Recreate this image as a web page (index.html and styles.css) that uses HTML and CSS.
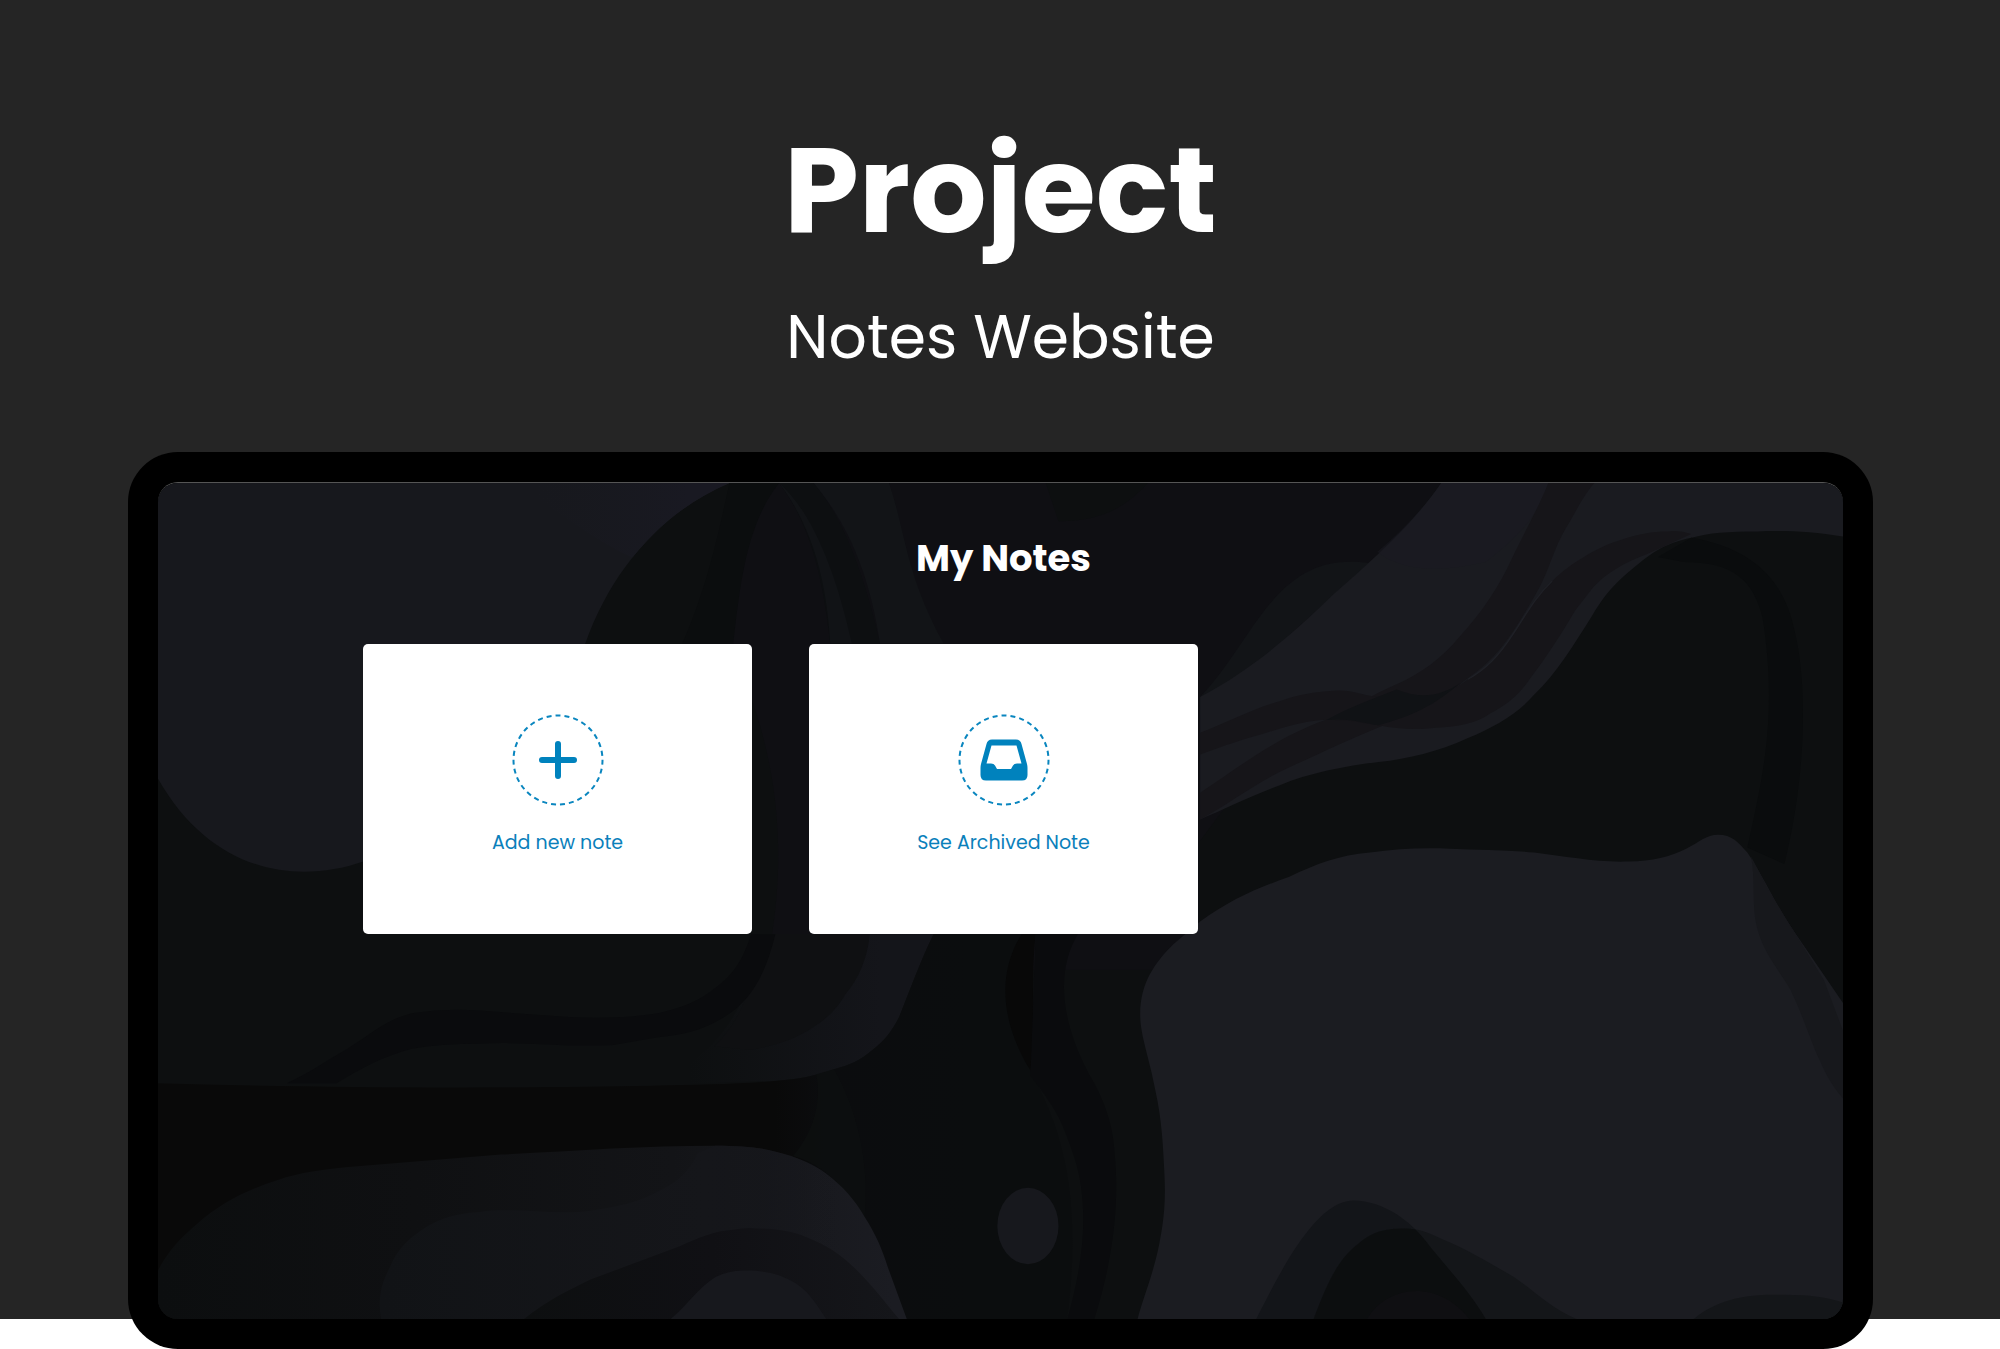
FILE: index.html
```html
<!DOCTYPE html>
<html lang="en">
<head>
<meta charset="utf-8">
<meta name="viewport" content="width=device-width, initial-scale=1">
<title>Project – Notes Website</title>
<link rel="stylesheet" href="styles.css">
</head>
<body>
<section class="showcase">
  <header class="intro">
    <h1 class="intro-title">Project</h1>
    <p class="intro-subtitle">Notes Website</p>
  </header>
  <div class="device">
    <main class="screen">
      <svg class="backdrop" viewBox="124 378 1321 656" preserveAspectRatio="none" aria-hidden="true">
        <defs>
          <linearGradient id="dune" x1="124" x2="700" y1="0" y2="0" gradientUnits="userSpaceOnUse">
            <stop offset="0" stop-color="#0c0e0f"/><stop offset=".35" stop-color="#0f1012"/><stop offset=".7" stop-color="#131417"/><stop offset="1" stop-color="#1b1c22"/>
          </linearGradient>
          <linearGradient id="hollow" x1="300" x2="660" y1="0" y2="0" gradientUnits="userSpaceOnUse">
            <stop offset="0" stop-color="#111316"/><stop offset=".7" stop-color="#15161a"/><stop offset="1" stop-color="#15161b" stop-opacity="0"/>
          </linearGradient>
          <linearGradient id="night" x1="124" x2="760" y1="0" y2="0" gradientUnits="userSpaceOnUse">
            <stop offset="0" stop-color="#090909"/><stop offset=".76" stop-color="#090909"/><stop offset=".82" stop-color="#0b0c0e"/><stop offset="1" stop-color="#0b0d0e"/>
          </linearGradient>
          <linearGradient id="lens" x1="411" x2="705" y1="0" y2="0" gradientUnits="userSpaceOnUse">
            <stop offset="0" stop-color="#0d0f10"/><stop offset=".5" stop-color="#101014"/><stop offset="1" stop-color="#15161a"/>
          </linearGradient>
          <linearGradient id="violet" x1="420" x2="540" y1="0" y2="0" gradientUnits="userSpaceOnUse">
            <stop offset="0" stop-color="#181920" stop-opacity="0"/><stop offset="1" stop-color="#191922"/>
          </linearGradient>
          <linearGradient id="fold" x1="540" x2="690" y1="0" y2="0" gradientUnits="userSpaceOnUse">
            <stop offset="0" stop-color="#0d0f10"/><stop offset="1" stop-color="#14151a"/>
          </linearGradient>
          <clipPath id="peak"><path d="M985 1034C1000 1005 1030 941 1061 941C1085 941 1108 958 1121 977C1138 998 1152 1012 1165 1034Z"/></clipPath>
          <clipPath id="hill"><path d="M124 378H572C520 400 480 445 459 504H124Z"/></clipPath>
        </defs>
        <path fill="#0d0f10" d="M124 378H1445V1034H124Z"/>
        <path fill="#0f0f13" d="M575 378H1150L940 660V760H600C625 650 600 560 570 504Z"/>
        <path fill="#0b0d0e" d="M572 378H611C585 410 580 460 575 504H535C555 460 565 410 572 378Z"/>
        <path fill="#0d0f11" d="M611 378H638C665 410 680 460 690 504H651C645 450 635 410 611 378Z"/>
        <path fill="#111316" d="M611 378C636 400 655 445 668 504H651C648 450 635 410 611 378Z"/>
        <path fill="#121417" d="M638 378H697C710 415 710 450 740 504H690C682 450 665 410 638 378Z"/>
        <path fill="#0d0f10" d="M820 378H900C880 400 860 408 830 408Z"/>
        <path fill="#17181d" d="M124 378H572C520 400 480 445 459 504L285 675C230 694 165 682 124 610Z"/>
        <path fill="url(#violet)" clip-path="url(#hill)" d="M400 378H572L505 440C470 428 440 400 400 378Z"/>
        <path fill="#121417" d="M941 546C985 500 1000 430 1074 441L941 560Z"/>
        <path fill="#1a1b20" d="M1130 378H1445V420C1420 416 1400 415 1378 416C1355 416 1340 417 1326 421C1306 425 1295 433 1284 442C1268 455 1260 463 1249 481C1234 505 1220 528 1203 544C1190 559 1171 570 1151 578C1127 589 1105 594 1081 597C1055 600 1025 606 1004 615C980 624 960 634 941 642V546C980 525 1010 500 1046 465C1080 435 1108 410 1130 378Z"/>
        <path fill="#191922" d="M1130 378H1214C1206 405 1190 420 1165 440C1130 448 1100 448 1080 432C1100 415 1117 397 1130 378Z" opacity=".5"/>
        <path fill="#161519" d="M1214 378H1250C1240 390 1236 400 1228 413C1218 430 1215 445 1207 460C1190 490 1176 515 1151 531C1130 548 1110 558 1088 567C1060 578 1036 590 1011 601C985 613 965 629 941 642V621C970 602 1000 578 1039 564C1060 554 1075 545 1095 536C1115 527 1131 515 1144 499C1163 478 1175 460 1186 436C1196 415 1205 400 1214 378Z"/>
        <path fill="#161519" d="M1326 418Q1317 415 1308 416C1295 416 1285 418 1273 422C1260 426 1252 430 1242 436C1232 442 1225 447 1217 455C1204 467 1196 482 1186 497C1175 514 1165 524 1151 532C1140 540 1130 545 1116 546C1100 548 1088 547 1074 545C1065 543 1056 540 1046 541C1030 542 1018 544 1004 549C980 556 962 566 941 574V591C960 584 975 579 993 574C1012 568 1030 563 1046 564C1060 564 1070 567 1081 568C1096 571 1110 572 1126 570C1143 569 1157 567 1168 559C1182 552 1192 543 1200 531C1213 514 1225 495 1235 478L1249 460C1260 448 1275 440 1291 434Z"/>
        <path fill="#101215" d="M1095 540C1115 548 1130 545 1145 535C1125 552 1110 560 1081 568C1070 567 1060 562 1040 564C1058 554 1075 548 1095 540Z"/>
        <path fill="none" stroke="#1f2026" d="M1217 455C1204 467 1196 482 1186 497C1175 514 1165 524 1151 532"/>
        <path fill="#0a0c0d" d="M1326 421C1380 430 1400 460 1407 494C1416 530 1418 600 1399 677L1370 664C1382 610 1394 560 1382 484C1375 455 1360 440 1320 440L1300 436Z"/>
        <path fill="#1b1c21" d="M892 1034C896 1018 904 1000 909 975C913 955 914 940 913 920C912 898 911 878 906 855C901 828 894 812 894 795C894 770 906 754 920 740L941 722C965 705 985 696 1011 687C1032 677 1050 670 1074 668C1095 665 1115 664 1137 665C1160 666 1182 666 1203 668C1228 671 1253 676 1277 675C1295 675 1310 671 1322 665C1332 660 1338 654 1347 654C1358 654 1363 660 1370 668C1380 682 1390 705 1406 729L1445 786V1034Z"/>
        <path fill="#17181c" d="M1373 671C1385 695 1395 712 1406 729L1430 768L1445 808V861C1434 848 1430 838 1424 825C1417 808 1413 795 1404 776C1394 758 1380 745 1376 719C1374 700 1376 690 1373 671Z"/>
        <path fill="#131519" d="M985 1034C1000 1005 1030 941 1061 941C1085 941 1108 958 1121 977C1138 998 1152 1012 1165 1034Z"/>
        <path fill="#141619" d="M1030 1034C1040 1008 1048 988 1065 975C1076 965 1088 963 1101 963C1112 963 1120 966 1130 971C1150 979 1168 990 1187 1001C1203 1012 1215 1025 1236 1034Z"/>
        <path fill="#0c0e0f" clip-path="url(#peak)" d="M1030 1034C1040 1008 1048 988 1065 975C1076 965 1088 963 1101 963C1112 963 1120 966 1130 971C1150 979 1168 990 1187 1001L1236 1034Z"/>
        <path fill="#0f0f12" clip-path="url(#peak)" d="M1072 1034C1085 1010 1125 1000 1152 1034Z"/>
        <path fill="#141619" d="M1328 1034C1345 1020 1365 1015 1391 1015Q1425 1014 1445 1021V1034Z"/>
        <path fill="url(#fold)" d="M595 732H732C722 752 713 777 705 797C699 809 693 816 684 823C675 831 666 835 654 838C640 843 625 846 609 847L510 850C560 830 590 790 595 732Z"/>
        <path fill="#0f1012" d="M595 732H682C680 752 673 767 663 779C655 793 646 800 633 808C617 817 604 820 588 823L560 820C582 800 594 765 595 732Z"/>
        <path fill="#0a0b0d" d="M225 849C243 841 255 832 271 823C290 811 303 799 323 794Q350 790 376 792L446 797Q485 799 516 794C538 789 550 783 561 774C576 763 583 751 589 732H608C600 765 588 785 568 797C550 808 535 811 516 813L481 819C445 821 410 816 376 818Q345 818 323 822C300 828 282 838 264 849Z"/>
        <path fill="url(#night)" d="M124 849C260 853 400 853 510 851C545 850 580 850 609 847C625 846 640 843 654 838C666 835 675 831 684 823C693 816 699 809 705 797C713 777 722 752 732 732H801C787 766 787 800 808 839C830 880 850 930 837 1034H124Z"/>
        <path fill="#0d0f10" d="M640 842L654 838C672 870 682 910 678 954L664 935Q645 912 622 906C640 885 644 860 640 842Z" opacity=".7"/>
        <path fill="#080808" d="M801 732H812C808 770 812 800 808 839C787 805 780 766 801 732Z"/>
        <path fill="#0a0b0d" d="M812 732H845C825 766 835 810 858 849C868 868 873 885 874 905C878 945 872 990 858 1034H837C845 1005 851 975 849 944C848 924 844 910 837 892C830 872 822 862 808 843Z"/>
        <path fill="url(#dune)" d="M124 996C132 980 142 970 155 959C173 943 195 932 218 925C235 919 252 917 271 915L393 905C450 902 505 898 561 898C580 898 595 899 609 903C625 907 637 912 648 920C661 930 670 940 678 954C687 968 692 980 696 993L711 1034H124Z"/>
        <path fill="url(#hollow)" d="M299 1034C296 1018 299 1006 306 993C311 980 321 970 334 962C347 954 360 951 376 950C405 946 435 953 463 949C485 946 502 942 516 934C531 927 541 918 547 904L561 898C580 898 595 899 609 903C625 907 637 912 648 920C661 930 670 940 678 954V1034Z"/>
        <path fill="url(#lens)" d="M411 1034C428 1020 445 1012 463 1003L533 977C548 970 560 965 575 964Q585 962 594 963C608 963 621 965 633 970C648 976 659 983 669 993C683 1006 693 1020 705 1034Z"/>
        <path fill="#17181d" d="M526 1034C540 1022 547 1010 561 1001Q573 995 586 996C601 996 613 999 624 1006C636 1014 641 1024 648 1034Z"/>
        <ellipse fill="#17181d" cx="806" cy="961" rx="24" ry="30"/>
      </svg>
      <h2 class="screen-title">My Notes</h2>
      <div class="notes">
        <button class="note-card" type="button">
          <svg class="note-icon" viewBox="0 0 92 92" aria-hidden="true">
            <circle class="ring" cx="46" cy="46" r="44.5" pathLength="279" transform="rotate(-90 46 46)"/>
            <path class="plus" d="M46 30V62M30 46H62"/>
          </svg>
          <span class="note-label">Add new note</span>
        </button>
        <a class="note-card" href="#archive">
          <svg class="note-icon" viewBox="0 0 92 92" aria-hidden="true">
            <circle class="ring" cx="46" cy="46" r="44.5" pathLength="279" transform="rotate(-90 46 46)"/>
            <path class="inbox" fill-rule="evenodd" d="M34 25.500H58Q62.500 25.500 63.500 30L69 50Q69.500 52 69.500 54V61Q69.500 66.500 64 66.500H28Q22.500 66.500 22.500 61V54Q22.500 52 23 50L28.500 30Q29.500 25.500 34 25.500ZM33.500 31.500L28.500 49.500H33Q36 49.500 37 51.500L39 55H53L55 51.500Q56 49.500 59 49.500H63.500L58.500 31.500Z"/>
          </svg>
          <span class="note-label">See Archived Note</span>
        </a>
      </div>
    </main>
  </div>
</section>
</body>
</html>
```
FILE: styles.css
```css
*, *::before, *::after { box-sizing: border-box; }

body {
  margin: 0;
  background: #fff;
  font-family: Poppins, Inter, "Open Sans", sans-serif;
  color: #fff;
}

h1, h2, p { margin: 0; }

/* The dark backdrop stops short so that the bottom bezel hangs over its edge. */
.showcase {
  display: flex;
  flex-direction: column;
  gap: 79px;
  padding: 118px 127px 0 128px;
  background: linear-gradient(#252525, #252525) no-repeat 0 0 / 100% calc(100% - 30px);
}

.intro {
  display: flex;
  flex-direction: column;
  gap: 39px;
  text-align: center;
}

.intro-title {
  font-size: 120px;
  line-height: 144px;
  font-weight: 700;
}

.intro-subtitle {
  font-size: 60px;
  line-height: 72px;
  font-weight: 400;
}

.device {
  padding: 30px;
  border-radius: 50px;
  background: #000;
}

.screen {
  position: relative;
  display: flex;
  flex-direction: column;
  gap: 61px;
  aspect-ratio: 1685 / 837;
  padding: 50px 199px 50px 205px;
  border-radius: 20px;
  background: #0d0f10;
  overflow: hidden;
  isolation: isolate;
  border-top: 1px solid #555;
}

.backdrop {
  position: absolute;
  inset: 0;
  z-index: -1;
  width: 100%;
  height: 100%;
}

.screen-title {
  font-size: 37px;
  line-height: 50px;
  font-weight: 700;
  text-align: center;
}

.notes {
  display: grid;
  grid-template-columns: repeat(3, 1fr);
  gap: 57px;
}

.note-card {
  display: flex;
  flex-direction: column;
  align-items: center;
  gap: 23px;
  min-height: 290px;
  padding: 70px 20px 20px;
  border: 0;
  border-radius: 5px;
  background: #fff;
  color: #0a80bb;
  font: inherit;
  text-decoration: none;
  cursor: pointer;
}

.note-icon {
  width: 92px;
  height: 92px;
}

.ring {
  fill: none;
  stroke: #0a86bf;
  stroke-width: 2;
  stroke-dasharray: 5 4;
  stroke-dashoffset: 2.5;
}

.plus {
  fill: none;
  stroke: #0082bd;
  stroke-width: 6;
  stroke-linecap: round;
}

.inbox { fill: #0082bd; }

.note-label {
  font-size: 19px;
  line-height: 28px;
  font-weight: 400;
}
```
